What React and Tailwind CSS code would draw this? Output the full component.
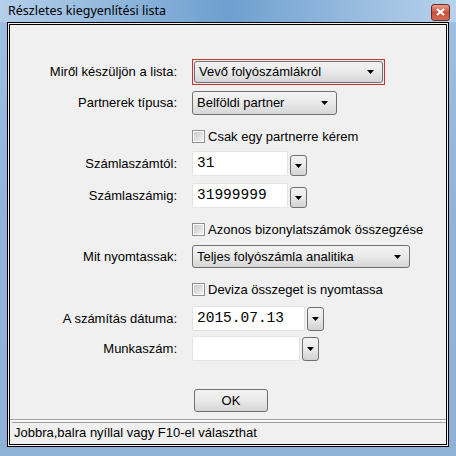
import React from "react";

const F = { fontFamily: '"Liberation Sans", Arial, sans-serif' };
const M = { fontFamily: '"Liberation Mono", "Courier New", monospace' };

function Arrow() {
  return (
    <svg width="7" height="4" viewBox="0 0 7 4" className="shrink-0">
      <path d="M0 0H7L3.5 4Z" fill="#000" />
    </svg>
  );
}

function Combo({ text, w, h, red }) {
  const inner = (
    <div
      className="flex items-center justify-between pl-[4px] pr-[8px] rounded-[3px] border border-[#707070] bg-gradient-to-b from-[#f3f3f3] via-[#e9e9e9] to-[#d6d6d6] text-[13px] text-black h-full"
      style={F}
    >
      <span>{text}</span>
      <Arrow />
    </div>
  );
  if (red)
    return (
      <div className={`${w} ${h} border border-[#c0363a] p-px bg-[#f5e6e6]`}>{inner}</div>
    );
  return <div className={`${w} ${h}`}>{inner}</div>;
}

function DropBtn({ h }) {
  return (
    <div
      className={`w-[17px] ${h} rounded-[3px] border border-[#707070] bg-gradient-to-b from-[#f3f3f3] via-[#e9e9e9] to-[#d2d2d2] flex items-center justify-center`}
    >
      <Arrow />
    </div>
  );
}

function Input({ value, w, btnH, gap }) {
  return (
    <div className={`flex items-end ${gap}`}>
      <div
        className={`${w} h-[25px] bg-white border border-[#e3e3e3] rounded-[2px] flex items-center pl-[4px] text-[14.5px] text-black`}
        style={M}
      >
        {value}
      </div>
      <DropBtn h={btnH} />
    </div>
  );
}

function Check({ text }) {
  return (
    <div className="flex items-center gap-[3px] h-[14px]">
      <div className="w-[13px] h-[13px] border border-[#8e8f8f] bg-white p-px">
        <div className="w-full h-full bg-gradient-to-br from-[#cbcbcb] to-[#f1f1f1]" />
      </div>
      <span className="text-[13px] text-black leading-none" style={F}>
        {text}
      </span>
    </div>
  );
}

function Row({ label, mt, h, children }) {
  return (
    <div className={`flex items-center ${mt} ${h}`}>
      <div className="w-[167px] text-right text-[13px] text-black" style={F}>
        {label}
      </div>
      <div className="ml-[15px] flex items-center h-full">{children}</div>
    </div>
  );
}

export default function App() {
  return (
    <div className="w-[456px] h-[456px] flex flex-col bg-gradient-to-b from-[#9ec0e2] via-[#8fb4d8] to-[#8db2d6] overflow-hidden">
      <div className="h-[22px] flex items-center justify-between pl-[8px] pr-[6px] bg-gradient-to-r from-[#b4cfea] via-[#6e9fcf] to-[#b8d2ec]">
        <span className="text-[12.5px] text-black" style={{ fontFamily: '"Noto Sans", "Open Sans", sans-serif' }}>
          Részletes kiegyenlítési lista
        </span>
        <div className="w-[19px] h-[17px] mt-[2px] rounded-[3px] border border-[#6b2a22] bg-gradient-to-b from-[#e8a08f] via-[#c9503c] to-[#d26a52] flex items-center justify-center">
          <svg width="9" height="8" viewBox="0 0 9 8">
            <path d="M1 1L8 7M8 1L1 7" stroke="#fff" strokeWidth="2.2" />
          </svg>
        </div>
      </div>
      <div className="mx-[7px] mb-[9px] flex-1 border border-black bg-[#f0f0f0] p-px flex flex-col">
        <div className="flex-1 border border-black flex flex-col bg-[#f0f0f0]">
          <div className="flex-1 border-b border-[#a0a0a0] flex flex-col">
            <Row label="Miről készüljön a lista:" mt="mt-[34px]" h="h-[26px]">
              <Combo text="Vevő folyószámlákról" w="w-[193px]" h="h-[26px]" red />
            </Row>
            <Row label="Partnerek típusa:" mt="mt-[6px]" h="h-[24px]">
              <Combo text="Belföldi partner" w="w-[145px]" h="h-[24px]" />
            </Row>
            <Row label="" mt="mt-[14px]" h="h-[14px]">
              <Check text="Csak egy partnerre kérem" />
            </Row>
            <Row label="Számlaszámtól:" mt="mt-[8px]" h="h-[25px]">
              <Input value="31" w="w-[96px]" btnH="h-[21px]" gap="gap-[2px]" />
            </Row>
            <Row label="Számlaszámig:" mt="mt-[7px]" h="h-[25px]">
              <Input value="31999999" w="w-[96px]" btnH="h-[21px]" gap="gap-[2px]" />
            </Row>
            <Row label="" mt="mt-[14px]" h="h-[14px]">
              <Check text="Azonos bizonylatszámok összegzése" />
            </Row>
            <Row label="Mit nyomtassak:" mt="mt-[9px]" h="h-[23px]">
              <Combo text="Teljes folyószámla analitika" w="w-[218px]" h="h-[23px]" />
            </Row>
            <Row label="" mt="mt-[14px]" h="h-[14px]">
              <Check text="Deviza összeget is nyomtassa" />
            </Row>
            <Row label="A számítás dátuma:" mt="mt-[10px]" h="h-[25px]">
              <Input value="2015.07.13" w="w-[113px]" btnH="h-[24px]" gap="gap-[2px]" />
            </Row>
            <Row label="Munkaszám:" mt="mt-[5px]" h="h-[25px]">
              <Input value="" w="w-[108px]" btnH="h-[24px]" gap="gap-[2px]" />
            </Row>
            <div className="flex mt-[28px] pl-[184px]">
              <div
                className="w-[74px] h-[23px] rounded-[3px] border border-[#707070] bg-gradient-to-b from-[#f3f3f3] via-[#e9e9e9] to-[#d6d6d6] flex items-center justify-center text-[13px] text-black"
                style={F}
              >
                OK
              </div>
            </div>
          </div>
          <div className="h-[24px] border-t border-white flex items-center pl-[2px]">
            <div className="flex-1 h-[22px] border-t border-[#a0a0a0] flex items-center pl-[2px] text-[13px] text-black" style={F}>
              Jobbra,balra nyíllal vagy F10-el választhat
            </div>
          </div>
        </div>
      </div>
    </div>
  );
}
